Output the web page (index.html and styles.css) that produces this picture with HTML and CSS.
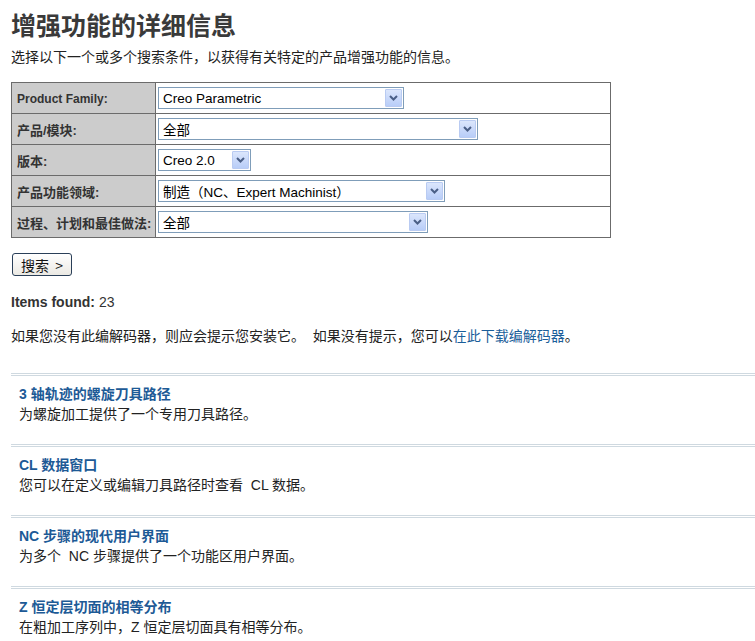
FILE: index.html
```html
<!DOCTYPE html>
<html lang="zh-CN">
<head>
<meta charset="utf-8">
<title>增强功能的详细信息</title>
<link rel="stylesheet" href="styles.css">
</head>
<body>
<h1 class="title">增强功能的详细信息</h1>
<p class="intro">选择以下一个或多个搜索条件，以获得有关特定的产品增强功能的信息。</p>

<table class="criteria">
  <tr>
    <th><span class="latin">Product Family:</span></th>
    <td><div class="select w1"><span class="val">Creo Parametric</span><span class="arrow"><svg width="9" height="6" viewBox="0 0 9 6"><path d="M1 1 L4.5 4.5 L8 1" fill="none" stroke="#4a5f86" stroke-width="2"/></svg></span></div></td>
  </tr>
  <tr>
    <th>产品/模块:</th>
    <td><div class="select w2"><span class="val">全部</span><span class="arrow"><svg width="9" height="6" viewBox="0 0 9 6"><path d="M1 1 L4.5 4.5 L8 1" fill="none" stroke="#4a5f86" stroke-width="2"/></svg></span></div></td>
  </tr>
  <tr>
    <th>版本:</th>
    <td><div class="select w3"><span class="val">Creo 2.0</span><span class="arrow"><svg width="9" height="6" viewBox="0 0 9 6"><path d="M1 1 L4.5 4.5 L8 1" fill="none" stroke="#4a5f86" stroke-width="2"/></svg></span></div></td>
  </tr>
  <tr>
    <th>产品功能领域:</th>
    <td><div class="select w4"><span class="val">制造（NC、Expert Machinist）</span><span class="arrow"><svg width="9" height="6" viewBox="0 0 9 6"><path d="M1 1 L4.5 4.5 L8 1" fill="none" stroke="#4a5f86" stroke-width="2"/></svg></span></div></td>
  </tr>
  <tr>
    <th>过程、计划和最佳做法:</th>
    <td><div class="select w5"><span class="val">全部</span><span class="arrow"><svg width="9" height="6" viewBox="0 0 9 6"><path d="M1 1 L4.5 4.5 L8 1" fill="none" stroke="#4a5f86" stroke-width="2"/></svg></span></div></td>
  </tr>
</table>

<button class="search" type="button">搜索&nbsp; &gt;</button>

<p class="found"><b>Items found:</b> 23</p>

<p class="codec">如果您没有此编解码器，则应会提示您安装它。 &nbsp;如果没有提示，您可以<a href="#">在此下载编解码器</a>。</p>

<ul class="results">
  <li>
    <a class="rtitle" href="#">3 轴轨迹的螺旋刀具路径</a>
    <p class="rdesc">为螺旋加工提供了一个专用刀具路径。</p>
  </li>
  <li>
    <a class="rtitle" href="#">CL 数据窗口</a>
    <p class="rdesc">您可以在定义或编辑刀具路径时查看 &nbsp;CL 数据。</p>
  </li>
  <li>
    <a class="rtitle" href="#">NC 步骤的现代用户界面</a>
    <p class="rdesc">为多个 &nbsp;NC 步骤提供了一个功能区用户界面。</p>
  </li>
  <li>
    <a class="rtitle" href="#">Z 恒定层切面的相等分布</a>
    <p class="rdesc">在粗加工序列中，Z 恒定层切面具有相等分布。</p>
  </li>
</ul>
</body>
</html>
```

FILE: styles.css
```css
html, body {
  margin: 0;
  padding: 0;
  background: #ffffff;
}
body {
  padding-left: 11px;
  font-family: "Liberation Sans", "Noto Sans CJK SC", sans-serif;
  color: #333333;
  font-size: 14px;
  overflow: hidden;
}
.title {
  margin: 9px 0 0 0;
  font-size: 25px;
  line-height: 30px;
  font-weight: 700;
  color: #3a3a3a;
  font-family: "Noto Sans CJK SC", sans-serif;
}
.intro {
  margin: 8px 0 0 0;
  font-size: 14px;
  line-height: 20px;
  color: #222;
}
.criteria {
  margin-top: 15px;
  border-collapse: collapse;
  width: 600px;
}
.criteria th,
.criteria td {
  border: 1px solid #6b6b6b;
  height: 30px;
  padding: 0;
  vertical-align: middle;
}
.criteria th {
  width: 138px;
  background: #cccccc;
  text-align: left;
  padding-left: 5px;
  font-size: 13px;
  font-weight: bold;
  color: #333;
  white-space: nowrap;
}
.criteria th .latin {
  font-size: 12px;
}
.criteria td {
  padding-left: 2px;
}
.select {
  display: flex;
  align-items: center;
  height: 22px;
  box-sizing: border-box;
  border: 1px solid #7f9db9;
  background: #fff;
  padding: 0 1px 0 4px;
  font-size: 14px;
  color: #000;
}
.select .val {
  flex: 1;
  white-space: nowrap;
  overflow: hidden;
  font-size: 13.5px;
}
.select .arrow {
  width: 15px;
  height: 16px;
  border: 1px solid #b9cbf2;
  border-radius: 1px;
  background: linear-gradient(#dbe6fc, #b8cdf8);
  display: flex;
  align-items: center;
  justify-content: center;
}
.w1 { width: 246px; }
.w2 { width: 320px; }
.w3 { width: 93px; }
.w4 { width: 287px; }
.w5 { width: 270px; }

.search {
  display: block;
  margin: 15px 0 0 1px;
  width: 60px;
  height: 23px;
  border: 1px solid #2a3f58;
  border-radius: 3px;
  background: linear-gradient(#ffffff, #ebe9e3);
  font-family: "Noto Sans CJK SC", sans-serif;
  font-size: 14px;
  color: #111;
  padding: 0;
  line-height: 20px;
}
.found {
  margin: 16px 0 0 0;
  font-size: 14px;
  line-height: 20px;
  color: #333;
}
.codec {
  margin: 14px 0 0 0;
  font-size: 14px;
  line-height: 20px;
  color: #222;
}
.codec a {
  color: #1a5e9a;
  text-decoration: none;
}
.results {
  list-style: none;
  margin: 27px 0 0 0;
  padding: 0;
}
.results li {
  border-top: 3px double #cfd9e0;
  height: 68px;
  padding-left: 8px;
}
.rtitle {
  display: block;
  margin-top: 8px;
  font-size: 14px;
  line-height: 20px;
  font-weight: bold;
  color: #1d5a96;
  text-decoration: none;
}
.rdesc {
  margin: 0;
  font-size: 14px;
  line-height: 20px;
  color: #222;
}
```
